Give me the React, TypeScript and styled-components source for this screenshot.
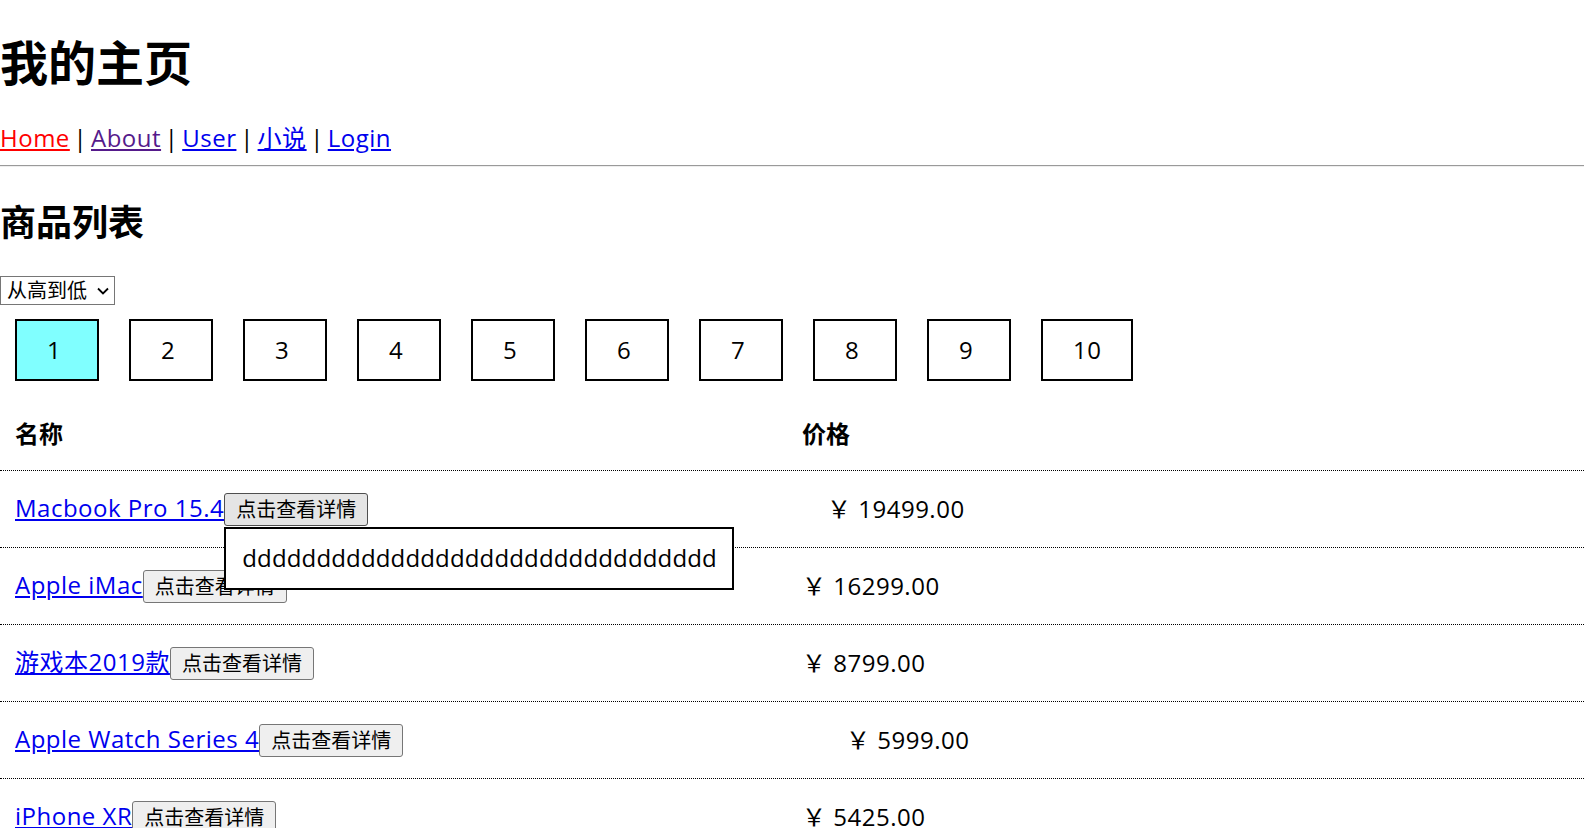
import styled, { createGlobalStyle } from "styled-components"

const GlobalStyle = createGlobalStyle`
  body {
    margin: 0;
    font-family: "Open Sans", "Noto Sans CJK SC", sans-serif;
    font-size: 24px;
    line-height: 32px;
    letter-spacing: 0.5px;
    color: #000;
    background: #fff;
  }
`

const Title = styled.h1`
  margin: 31px 0 0;
  font-size: 48px;
  line-height: 63px;
  font-weight: bold;
  letter-spacing: 0;
`

const Nav = styled.nav`
  margin-top: 28px;
  line-height: 32px;
  word-spacing: -3px;
`

const NavLink = styled.a<{ $color: string }>`
  color: ${(p) => p.$color};
  text-decoration: underline;
`

const Rule = styled.hr`
  margin: 11px 0 0;
  height: 0;
  border: none;
  border-top: 1px solid #9a9a9a;
  border-bottom: 1px solid #eeeeee;
`

const SubTitle = styled.h2`
  margin: 32px 0 0;
  font-size: 36px;
  line-height: 48px;
  font-weight: bold;
  letter-spacing: 0;
`

const SelectWrap = styled.div`
  position: relative;
  display: inline-block;
  margin-top: 29px;
  vertical-align: top;
`

const SortSelect = styled.select`
  display: block;
  appearance: none;
  width: 115px;
  height: 29px;
  font-family: "Open Sans", "Noto Sans CJK SC", sans-serif;
  font-size: 20px;
  letter-spacing: 0;
  color: #000;
  background: #fff;
  border: 1px solid #767676;
  border-radius: 0;
  padding: 0 0 0 6px;
`

const Chevron = styled.svg`
  position: absolute;
  right: 6px;
  top: 11px;
  width: 12px;
  height: 8px;
  pointer-events: none;
`

const Pager = styled.div`
  display: flex;
  gap: 30px;
  margin-top: 14px;
  padding-left: 15px;
`

const PageBox = styled.div<{ $current?: boolean }>`
  min-width: 20px;
  padding: 13px 30px 13px 30px;
  border: 2px solid #000;
  line-height: 32px;
  background: ${(p) => (p.$current ? "#80ffff" : "#fff")};
`

const Table = styled.div`
  margin-top: 13px;
`

const Row = styled.div`
  display: grid;
  grid-template-columns: 787px 1fr;
  align-items: center;
  height: 76px;
  padding-left: 15px;
  border-bottom: 1px dotted #000;
`

const HeadCell = styled.div`
  font-weight: bold;
  letter-spacing: 0;
  padding-top: 4px;
`

const NameCell = styled.div`
  white-space: nowrap;
`

const ProductLink = styled.a`
  color: #0000ee;
  text-decoration: underline;
`

const DetailWrap = styled.span`
  position: relative;
  display: inline-block;
`

const DetailButton = styled.button<{ $hover?: boolean }>`
  font-family: "Open Sans", "Noto Sans CJK SC", sans-serif;
  font-size: 20px;
  line-height: 29px;
  letter-spacing: 0;
  padding: 1px 11px;
  color: #000;
  background: ${(p) => (p.$hover ? "#e5e5e5" : "#efefef")};
  border: 1px solid ${(p) => (p.$hover ? "#4f4f4f" : "#767676")};
  border-radius: 3px;
`

const Popup = styled.div`
  position: absolute;
  top: calc(100% + 1px);
  left: 0;
  z-index: 2;
  padding: 13px 15px 14px 16px;
  background: #fff;
  border: 2px solid #000;
  line-height: 32px;
  letter-spacing: 0.15px;
  white-space: nowrap;
`

const PriceCell = styled.div<{ $offset: number }>`
  padding-left: ${(p) => p.$offset}px;
`

const products = [
  { name: "Macbook Pro 15.4", price: "19499.00", offset: 25, open: true },
  { name: "Apple iMac", price: "16299.00", offset: 0 },
  { name: "游戏本2019款", price: "8799.00", offset: 0 },
  { name: "Apple Watch Series 4", price: "5999.00", offset: 44 },
  { name: "iPhone XR", price: "5425.00", offset: 0 },
]

const pages = [1, 2, 3, 4, 5, 6, 7, 8, 9, 10]

export default function App() {
  return (
    <>
      <GlobalStyle />
      <Title>我的主页</Title>
      <Nav>
        <NavLink href="#" $color="#ff0000">Home</NavLink> |{" "}
        <NavLink href="#" $color="#551a8b">About</NavLink> |{" "}
        <NavLink href="#" $color="#0000ee">User</NavLink> |{" "}
        <NavLink href="#" $color="#0000ee">小说</NavLink> |{" "}
        <NavLink href="#" $color="#0000ee">Login</NavLink>
      </Nav>
      <Rule />
      <SubTitle>商品列表</SubTitle>
      <SelectWrap>
        <SortSelect defaultValue="desc">
          <option value="desc">从高到低</option>
          <option value="asc">从低到高</option>
        </SortSelect>
        <Chevron viewBox="0 0 12 8">
          <path d="M1 1.5l5 5 5-5" fill="none" stroke="#000" strokeWidth="1.8" />
        </Chevron>
      </SelectWrap>
      <Pager>
        {pages.map((n) => (
          <PageBox key={n} $current={n === 1}>
            {n}
          </PageBox>
        ))}
      </Pager>
      <Table>
        <Row>
          <HeadCell>名称</HeadCell>
          <HeadCell>价格</HeadCell>
        </Row>
        {products.map((p) => (
          <Row key={p.name}>
            <NameCell>
              <ProductLink href="#">{p.name}</ProductLink>
              <DetailWrap>
                <DetailButton $hover={p.open}>点击查看详情</DetailButton>
                {p.open && <Popup>{"d".repeat(32)}</Popup>}
              </DetailWrap>
            </NameCell>
            <PriceCell $offset={p.offset}>￥ {p.price}</PriceCell>
          </Row>
        ))}
      </Table>
    </>
  )
}
